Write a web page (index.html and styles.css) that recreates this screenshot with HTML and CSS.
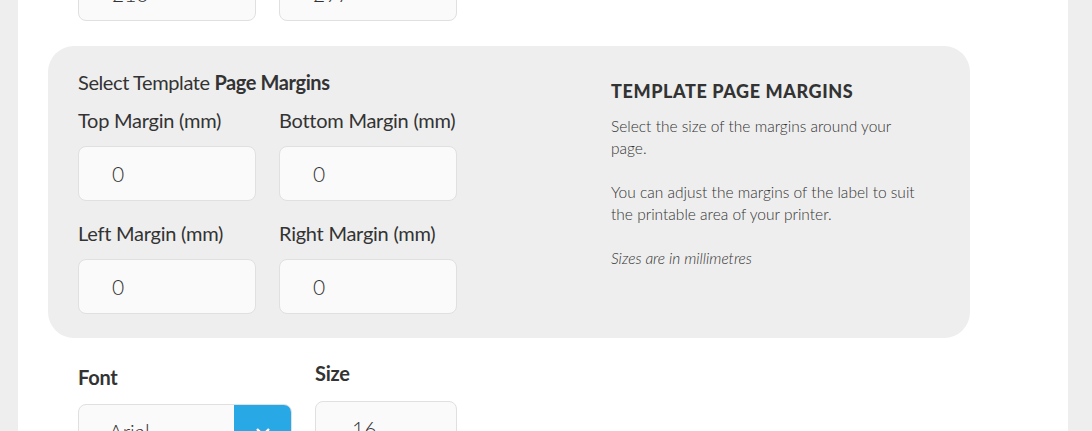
FILE: index.html
```html
<!DOCTYPE html>
<html>
<head>
<meta charset="utf-8">
<link rel="stylesheet" href="styles.css">
</head>
<body>
<div class="page">
  <div class="row top-row">
    <div class="field"><div class="input">210</div></div>
    <div class="field"><div class="input">297</div></div>
  </div>

  <section class="panel">
    <div class="panel-form">
      <h2 class="panel-title">Select Template <b>Page Margins</b></h2>
      <div class="grid">
        <div class="field">
          <label class="label">Top Margin (mm)</label>
          <div class="input">0</div>
        </div>
        <div class="field">
          <label class="label">Bottom Margin (mm)</label>
          <div class="input">0</div>
        </div>
        <div class="field">
          <label class="label">Left Margin (mm)</label>
          <div class="input">0</div>
        </div>
        <div class="field">
          <label class="label">Right Margin (mm)</label>
          <div class="input">0</div>
        </div>
      </div>
    </div>
    <aside class="info">
      <h3 class="info-title">TEMPLATE PAGE MARGINS</h3>
      <p>Select the size of the margins around your page.</p>
      <p>You can adjust the margins of the label to suit the printable area of your printer.</p>
      <p class="em">Sizes are in millimetres</p>
    </aside>
  </section>

  <div class="row bottom-row">
    <div class="font-field">
      <label class="label bold font-label">Font</label>
      <div class="select">
        <span class="select-value">Arial</span>
        <span class="select-btn">
          <svg width="16" height="10" viewBox="0 0 16 10"><path d="M2 2l6 6 6-6" fill="none" stroke="#fff" stroke-width="2.4"/></svg>
        </span>
      </div>
    </div>
    <div class="size-field">
      <label class="label bold size-label">Size</label>
      <div class="input small">16</div>
    </div>
  </div>
</div>
</body>
</html>
```

FILE: styles.css
```css
* { box-sizing: border-box; }
html, body { margin: 0; height: 100%; overflow: hidden; }
body {
  background: #eeeeee;
  font-family: "Lato", "Liberation Sans", sans-serif;
  color: #333;
}
.page {
  margin-left: 18px;
  width: 1050px;
  height: 100%;
  background: #fff;
  padding-left: 30px;
  overflow: hidden;
}
.row { display: flex; gap: 23px; padding-left: 30px; }
.top-row { margin-top: -34px; }
.field { display: flex; flex-direction: column; }
.input {
  width: 178px;
  height: 55px;
  background: #fafafa;
  border: 1px solid #e0e0e0;
  border-radius: 8px;
  padding-left: 33px;
  font-size: 21px;
  font-weight: 300;
  line-height: 53px;
  color: #333;
}
.panel {
  margin-top: 25px;
  width: 922px;
  height: 292px;
  background: #eeeeee;
  border-radius: 26px;
  padding: 24px 30px 0 30px;
  display: flex;
}
.panel-form { width: 533px; }
.panel-title {
  margin: 0;
  font-size: 20px;
  line-height: 24px;
  font-weight: 400;
  letter-spacing: -0.4px;
  white-space: nowrap;
}
.panel-title b { font-weight: 700; }
.grid {
  margin-top: 14px;
  display: grid;
  grid-template-columns: 178px 178px;
  column-gap: 23px;
  row-gap: 20px;
}
.label {
  display: block;
  font-size: 20px;
  line-height: 24px;
  margin-bottom: 14px;
  letter-spacing: -0.25px;
  white-space: nowrap;
}
.info { padding-top: 10px; width: 310px; }
.info-title {
  margin: 0 0 13px 0;
  font-size: 18px;
  line-height: 22px;
  font-weight: 900;
  letter-spacing: 0.6px;
  white-space: nowrap;
}
.info p {
  margin: 0 0 22px 0;
  font-size: 15.5px;
  line-height: 22px;
  font-weight: 300;
  color: #333;
}
.info p.em { font-style: italic; }
.bottom-row { gap: 23px; }
.bold { font-weight: 700; }
.font-label { margin-top: 27px; margin-bottom: 15px; }
.size-label { margin-top: 23px; margin-bottom: 16px; }
.select {
  width: 214px;
  height: 55px;
  display: flex;
  border: 1px solid #e0e0e0;
  border-radius: 8px;
  background: #fafafa;
  overflow: hidden;
}
.select-value {
  flex: 1;
  padding-left: 30px;
  font-size: 21px;
  font-weight: 300;
  line-height: 53px;
}
.select-btn {
  width: 57px;
  background: #29a8e6;
  display: flex;
  justify-content: center;
  padding-top: 22px;
}
.input.small { width: 142px; padding-left: 36px; }
```
